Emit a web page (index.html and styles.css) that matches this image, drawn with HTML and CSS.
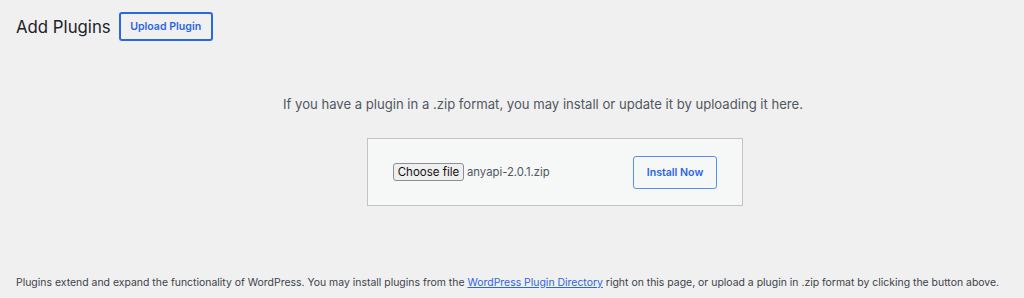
FILE: index.html
```html
<!DOCTYPE html>
<html>
<head>
<title>Add Plugins</title>
<meta charset="utf-8">
<link rel="stylesheet" href="styles.css">
</head>
<body>
<div class="wrap">
	<div class="page-head">
		<h1>Add Plugins</h1>
		<a class="upload-btn" href="#">Upload Plugin</a>
	</div>

	<div class="upload-plugin">
		<p class="install-help">If you have a plugin in a .zip format, you may install or update it by uploading it here.</p>
		<form class="upload-form">
			<span class="file-pick">
				<span class="file-btn">Choose file</span>
				<span class="file-name">anyapi-2.0.1.zip</span>
			</span>
			<span class="install-btn">Install Now</span>
		</form>
	</div>

	<p class="footer-note">Plugins extend and expand the functionality of WordPress. You may install plugins from the <a href="#">WordPress Plugin Directory</a> right on this page, or upload a plugin in .zip format by clicking the button above.</p>
</div>
</body>
</html>
```

FILE: styles.css
```css
body {
margin:0;
background:#f0f0f1;
color:#3c434a;
font-family:Inter, "Noto Sans", sans-serif; }

.wrap {
padding:12px 20px 0 16px; }

.page-head {
display:flex;
align-items:center;
gap:8px; }

h1 {
margin:0;
font-size:16.8px;
font-weight:400;
color:#1d2327; }

.upload-btn {
display:inline-block;
box-sizing:border-box;
height:29px;
width:94px;
line-height:25px;
text-align:center;
border:2px solid #2c66e3;
border-radius:3px;
color:#2c66e3;
font-size:10.6px;
font-weight:600;
text-decoration:none; }

.upload-plugin {
text-align:center;
padding-left:66px; }

.install-help {
margin:0;
padding-top:55px;
font-size:13.1px;
color:#50575e; }

.upload-form {
display:inline-flex;
box-sizing:border-box;
width:376px;
height:68px;
margin:26px 0 0 24px;
padding:0 25px;
justify-content:space-between;
align-items:center;
background:#f6f7f7;
border:1px solid #c3c4c7; }

.file-pick {
display:flex;
align-items:center;
gap:3px;
font-size:11.3px; }

.file-btn {
box-sizing:border-box;
height:18px;
width:71px;
line-height:16px;
border:1px solid #8c8f94;
border-radius:3px;
background:#efefef;
color:#111;
font-size:11.5px; }

.file-name {
color:#50575e; }

.install-btn {
box-sizing:border-box;
width:84px;
height:33px;
line-height:31px;
border:1px solid #5a8ef0;
border-radius:3px;
color:#2c66e3;
font-size:10.6px;
font-weight:600; }

.footer-note {
margin:70px 0 0;
font-size:10.45px;
white-space:nowrap;
color:#3c434a; }

.footer-note a {
color:#2c66e3; }
```
